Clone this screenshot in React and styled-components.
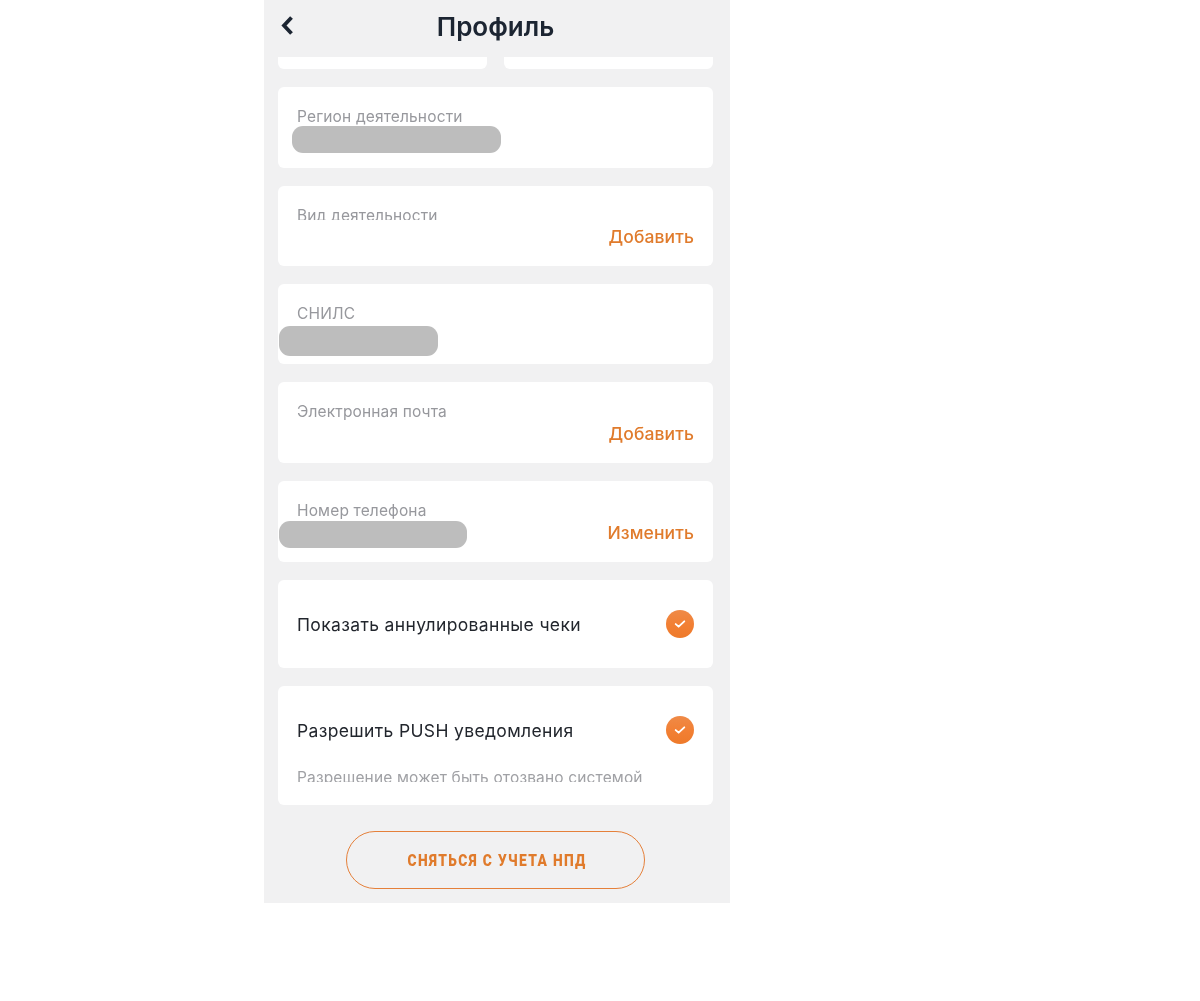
import React from 'react';
import styled, { createGlobalStyle } from 'styled-components';

const GlobalStyle = createGlobalStyle`
  html, body {
    margin: 0;
    padding: 0;
    background: #fff;
    font-family: Inter, Roboto, "Liberation Sans", sans-serif;
  }
`;

const Page = styled.div`
  width: 1200px;
  height: 1001px;
  display: flex;
  justify-content: flex-start;
  padding-left: 264px;
  box-sizing: border-box;
`;

const Phone = styled.div`
  width: 466px;
  height: 903px;
  background: #f1f1f2;
  padding: 0 17px 0 14px;
  box-sizing: border-box;
  display: flex;
  flex-direction: column;
  filter: blur(0.4px);
`;

const Header = styled.header`
  height: 57px;
  flex: none;
  position: relative;
  display: flex;
  align-items: center;
  justify-content: center;
  margin: 0 -17px 0 -14px;
`;

const BackButton = styled.button`
  position: absolute;
  left: 15px;
  top: 14px;
  padding: 0;
  border: 0;
  background: none;
  display: flex;
`;

const Title = styled.h1`
  margin: 0 3px 3px 0;
  font-size: 26px;
  line-height: 54px;
  font-weight: 600;
  color: #1c2532;
`;

const StubRow = styled.div`
  display: flex;
  gap: 17px;
  height: 12px;
  margin-bottom: 18px;
`;

const Stub = styled.div`
  flex: 1;
  background: #fff;
  border-radius: 0 0 6px 6px;
`;

const List = styled.div`
  display: flex;
  flex-direction: column;
  gap: 18px;
`;

const FieldCard = styled.section`
  position: relative;
  height: ${props => props.$height}px;
  background: #fff;
  border-radius: 6px;
  padding: 20px 19px 18px 19px;
  box-sizing: border-box;
  display: flex;
  justify-content: space-between;
`;

const FieldLabel = styled.div`
  font-size: 15.5px;
  line-height: 19px;
  height: ${props => (props.$clipped ? 14 : 19)}px;
  overflow: hidden;
  color: #97989d;
  letter-spacing: 0.15px;
`;

const Action = styled.a`
  align-self: flex-end;
  font-size: 17.5px;
  line-height: 22px;
  font-weight: 500;
  color: #e07b2c;
  letter-spacing: 0.1px;
`;

const Redaction = styled.div`
  position: absolute;
  left: ${props => props.$left}px;
  top: ${props => props.$top}px;
  width: ${props => props.$width}px;
  height: ${props => props.$tall}px;
  background: #bdbdbd;
  border-radius: 11px;
`;

const ToggleCard = styled.section`
  height: 88px;
  background: #fff;
  border-radius: 6px;
  padding: 30px 19px 0 19px;
  box-sizing: border-box;
`;

const PushCard = styled(ToggleCard)`
  height: 119px;
`;

const ToggleRow = styled.div`
  display: flex;
  align-items: center;
  justify-content: space-between;
  height: 28px;
`;

const ToggleText = styled.span`
  font-size: 17.5px;
  color: #22262d;
  letter-spacing: 0.35px;
`;

const CheckDot = styled.span`
  width: 28px;
  height: 28px;
  border-radius: 50%;
  background: linear-gradient(180deg, #ef8a47 0%, #f27f33 55%, #ee7a2a 100%);
  display: flex;
  align-items: center;
  justify-content: center;
`;

const Hint = styled.div`
  margin-top: 24px;
  height: 14px;
  overflow: hidden;
  font-size: 15.5px;
  line-height: 19px;
  color: #a0a1a5;
  letter-spacing: 0.15px;
`;

const LeaveButton = styled.button`
  align-self: center;
  margin: 26px 0 0 -1px;
  padding: 0 0 0 4px;
  width: 299px;
  height: 58px;
  flex: none;
  border: 1.5px solid #e5803a;
  border-radius: 29px;
  background: transparent;
  color: #e07b2c;
  font-family: Roboto, "Liberation Sans", sans-serif;
  font-size: 16px;
  font-weight: 900;
  letter-spacing: 1.6px;
`;

const LeaveLabel = styled.span`
  display: inline-block;
  white-space: nowrap;
  transform: scaleX(0.86);
`;

const Check = () => (
  <svg width="12" height="10" viewBox="0 0 14 11" fill="none">
    <path d="M2 5.6 L5.4 8.6 L12 2.4" stroke="#fff" strokeWidth="2.2" strokeLinecap="round" strokeLinejoin="round" />
  </svg>
);

const fields = [
  { label: 'Регион деятельности', height: 81, redaction: { left: 14, top: 39, width: 209, tall: 27 } },
  { label: 'Вид деятельности', height: 80, action: 'Добавить', clipped: true },
  { label: 'СНИЛС', height: 80, redaction: { left: 1, top: 42, width: 159, tall: 30 } },
  { label: 'Электронная почта', height: 81, action: 'Добавить' },
  { label: 'Номер телефона', height: 81, action: 'Изменить', redaction: { left: 1, top: 40, width: 188, tall: 27 } },
];

export default function App() {
  return (
    <Page>
      <GlobalStyle />
      <Phone>
        <Header>
          <BackButton aria-label="Назад">
            <svg width="18" height="24" viewBox="0 0 18 24" fill="none">
              <path d="M12.5 3.5 L5 11.5 L12.5 19.5" stroke="#1c2532" strokeWidth="3.8" strokeLinejoin="miter" />
            </svg>
          </BackButton>
          <Title>Профиль</Title>
        </Header>
        <StubRow>
          <Stub />
          <Stub />
        </StubRow>
        <List>
          {fields.map(field => (
            <FieldCard key={field.label} $height={field.height}>
              <FieldLabel $clipped={field.clipped}>{field.label}</FieldLabel>
              {field.action && <Action>{field.action}</Action>}
              {field.redaction && (
                <Redaction
                  $left={field.redaction.left}
                  $top={field.redaction.top}
                  $width={field.redaction.width}
                  $tall={field.redaction.tall}
                />
              )}
            </FieldCard>
          ))}
          <ToggleCard>
            <ToggleRow>
              <ToggleText>Показать аннулированные чеки</ToggleText>
              <CheckDot><Check /></CheckDot>
            </ToggleRow>
          </ToggleCard>
          <PushCard>
            <ToggleRow>
              <ToggleText>Разрешить PUSH уведомления</ToggleText>
              <CheckDot><Check /></CheckDot>
            </ToggleRow>
            <Hint>Разрешение может быть отозвано системой</Hint>
          </PushCard>
        </List>
        <LeaveButton><LeaveLabel>СНЯТЬСЯ С УЧЕТА НПД</LeaveLabel></LeaveButton>
      </Phone>
    </Page>
  );
}
